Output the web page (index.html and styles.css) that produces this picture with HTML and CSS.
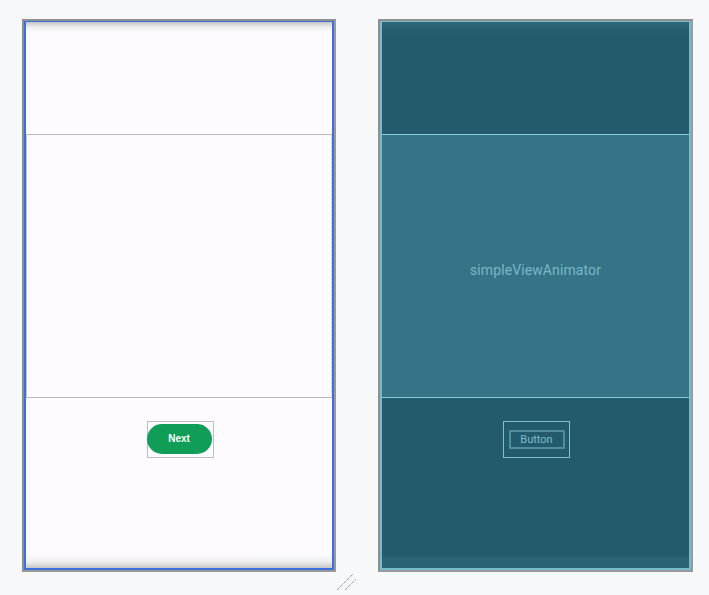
FILE: index.html
```html
<!DOCTYPE html>
<html>
<head>
<meta charset="utf-8">
<link rel="stylesheet" href="styles.css">
</head>
<body>
<div class="canvas">
  <div class="device design">
    <div class="frame">
      <div class="screen">
        <div class="top"></div>
        <div class="middle"></div>
        <div class="bottom">
          <div class="btn-box"><div class="pill">Next</div></div>
        </div>
      </div>
    </div>
  </div>
  <div class="device blueprint">
    <div class="frame">
      <div class="screen">
        <div class="top"></div>
        <div class="middle"><span class="label">simpleViewAnimator</span></div>
        <div class="bottom">
          <div class="btn-box"><div class="bp-btn">Button</div></div>
        </div>
      </div>
    </div>
  </div>
  <svg class="resize" width="22" height="20" viewBox="0 0 22 20">
    <line x1="1" y1="18" x2="17" y2="2" stroke="#666" stroke-width="1" stroke-dasharray="1 1"/>
    <line x1="9" y1="18" x2="20" y2="7" stroke="#666" stroke-width="1" stroke-dasharray="1 1"/>
  </svg>
</div>
</body>
</html>
```

FILE: styles.css
```css
html, body {
  margin: 0;
  padding: 0;
  background: #f7f8fa;
  font-family: "Liberation Sans", Arial, sans-serif;
}
.canvas {
  position: relative;
  width: 709px;
  height: 595px;
  display: flex;
  gap: 42px;
  padding: 19px 0 0 22px;
  box-sizing: border-box;
}
.device {
  border: 2px solid #8f8f8f;
  border-right-color: #9a9a9a;
  border-bottom-color: #9a9a9a;
  height: 553px;
  box-sizing: border-box;
}
.design { width: 314px; }
.blueprint { width: 315px; }
.design .frame {
  height: 100%;
  border: 2px solid #3f6fdc;
  border-top-width: 1px;
  box-sizing: border-box;
}
.blueprint .frame {
  height: 100%;
  border: 2px solid #74bccc;
  border-top-width: 1px;
  box-sizing: border-box;
  background: #235b6d;
}
.screen {
  height: 100%;
  display: flex;
  flex-direction: column;
}
.top { height: 112px; }
.middle { height: 262px; }
.bottom { flex: 1; display: flex; justify-content: center; padding-top: 23px; }

/* design */
.design .screen {
  background: linear-gradient(to bottom, #c4c4c4 0px, #eeeeee 5px, #fdfbfe 11px, #fdfbfe calc(100% - 14px), #eeeeee calc(100% - 6px), #c6c6c6 100%);
}
.design .middle {
  border-top: 1px solid #b9b9b9;
  border-bottom: 1px solid #b9b9b9;
  border-left: 1px solid #c4c4c4;
  border-right: 1px dotted #c4c4c4;
}
.btn-box { margin-left: 2px; }
.design .btn-box {
  width: 67px;
  height: 37px;
  border: 1px solid #bdbdbd;
  box-sizing: border-box;
  display: flex;
  align-items: center;
}
.pill {
  width: 65px;
  height: 30px;
  border-radius: 15px;
  background: #0f9d58;
  color: #ffffff;
  font-weight: bold;
  font-size: 10px;
  display: flex;
  align-items: center;
  justify-content: center;
  margin-left: -1px;
  margin-top: -2px;
}

/* blueprint */
.blueprint .screen {
  background: linear-gradient(to bottom, #2f6878 0px, #235b6d 12px, #235b6d calc(100% - 12px), #2a6374 calc(100% - 11px), #2a6374 100%);
}
.blueprint .middle {
  border-top: 1px solid #88cddd;
  border-bottom: 1px solid #88cddd;
  background: #377386;
  display: flex;
  align-items: center;
  justify-content: center;
}
.label {
  color: #78b7c8;
  font-family: Roboto, "Liberation Sans", sans-serif;
  font-size: 14px;
  letter-spacing: 0.1px;
  padding-top: 8px;
}
.blueprint .btn-box {
  width: 67px;
  height: 37px;
  border: 1px solid #7ec2d2;
  box-sizing: border-box;
  display: flex;
  align-items: center;
  justify-content: center;
}
.bp-btn {
  width: 56px;
  height: 19px;
  border: 2px solid rgba(126, 194, 210, 0.5);
  box-sizing: border-box;
  border-radius: 1px;
  color: #7fbccc;
  font-family: Roboto, "Liberation Sans", sans-serif;
  font-size: 11px;
  display: flex;
  align-items: center;
  justify-content: center;
}
.resize {
  position: absolute;
  left: 336px;
  top: 572px;
}
```
